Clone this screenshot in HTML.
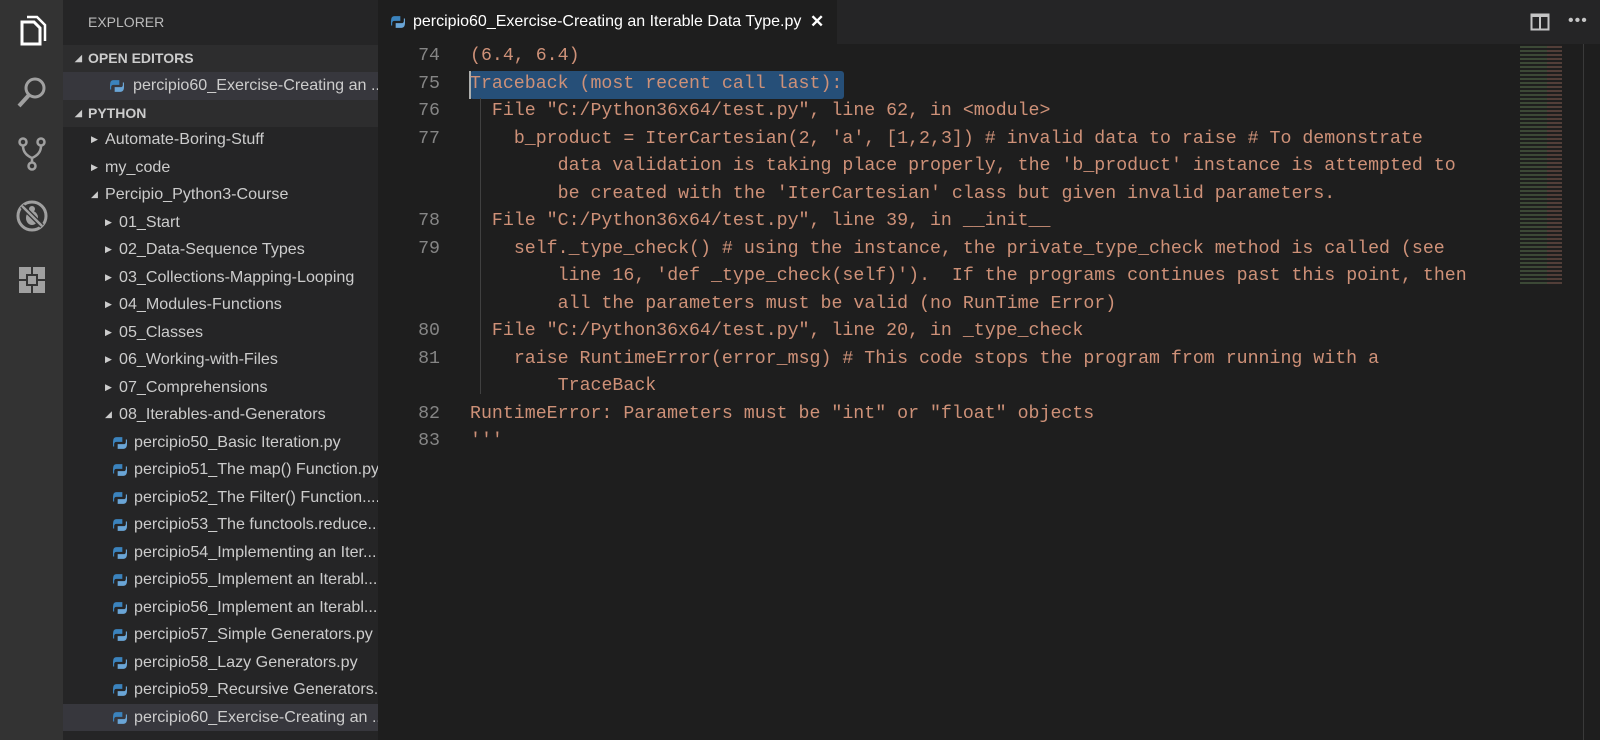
<!DOCTYPE html>
<html><head><meta charset="utf-8"><style>
*{margin:0;padding:0;box-sizing:border-box}
body{width:1600px;height:740px;background:#1e1e1e;overflow:hidden;position:relative;font-family:"Liberation Sans",sans-serif}
#act{position:absolute;left:0;top:0;width:63px;height:740px;background:#333}
#act svg{position:absolute;left:14px}
#side{position:absolute;left:63px;top:0;width:315px;height:740px;background:#252526;color:#ccc;font-size:16.1px}
.r{position:absolute;left:0;width:315px;height:27.5px;line-height:27.5px;white-space:nowrap;overflow:hidden}
.hd{font-weight:bold;font-size:14px;background:#2d2d2e;color:#ccc}
.sel{background:#37373d}
.tri{position:absolute;top:0;font-size:9px;color:#ccc}
.py{position:absolute;top:7px;width:14px;height:14px}
#tabs{position:absolute;left:378px;top:0;width:1222px;height:44px;background:#252526}
#tab{position:absolute;left:0;top:0;width:459px;height:44px;background:#1e1e1e;color:#fff;font-size:16px;line-height:44px}
#code{position:absolute;left:378px;top:44px;width:1222px;height:696px}
.l{position:absolute;font-family:"Liberation Mono",monospace;font-size:18.25px;color:#ce9178;white-space:pre;height:27.5px;line-height:27.5px}
.n{position:absolute;font-family:"Liberation Mono",monospace;font-size:18.25px;color:#858585;width:62px;text-align:right;left:0;line-height:27.5px}
</style></head><body>
<div id="act">
<svg style="top:12px" width="36" height="36" viewBox="0 0 36 36"><path d="M8 10h12l6 6v16H8z" fill="none" stroke="#fff" stroke-width="3"/><path d="M13 5h10l8 8v16" fill="none" stroke="#fff" stroke-width="2.5"/></svg>
<svg style="top:74px" width="36" height="36" viewBox="0 0 36 36"><circle cx="21" cy="14" r="9" fill="none" stroke="#a0a0a0" stroke-width="3"/><path d="M15 21L5 32" stroke="#a0a0a0" stroke-width="4"/></svg>
<svg style="top:136px" width="36" height="36" viewBox="0 0 36 36"><circle cx="9" cy="6" r="3.5" fill="none" stroke="#a0a0a0" stroke-width="2.5"/><circle cx="27" cy="6" r="3.5" fill="none" stroke="#a0a0a0" stroke-width="2.5"/><circle cx="18" cy="30" r="3.5" fill="none" stroke="#a0a0a0" stroke-width="2.5"/><path d="M9 10q0 8 9 12M27 10q0 8-9 12M18 22v4" fill="none" stroke="#a0a0a0" stroke-width="2.5"/></svg>
<svg style="top:198px" width="36" height="36" viewBox="0 0 36 36"><circle cx="18" cy="18" r="14" fill="none" stroke="#a0a0a0" stroke-width="3"/><ellipse cx="18" cy="20" rx="6" ry="7" fill="#a0a0a0"/><circle cx="18" cy="11" r="3" fill="#a0a0a0"/><path d="M8 8l20 20" stroke="#333" stroke-width="5"/><path d="M8 8l20 20" stroke="#a0a0a0" stroke-width="2.5"/></svg>
<svg style="top:262px" width="36" height="36" viewBox="0 0 36 36"><rect x="5" y="5" width="26" height="26" fill="#a0a0a0"/><rect x="12" y="12" width="12" height="12" fill="#333"/><rect x="14" y="14" width="8" height="8" fill="#a0a0a0"/><path d="M18 5v7M5 18h7M24 18h7M18 24v7" stroke="#333" stroke-width="2"/></svg>
</div>
<div id="side">
<div style="position:absolute;left:25px;top:14px;font-size:14px;color:#bbb">EXPLORER</div>
<div class="r hd" style="top:44.5px"><span class="tri" style="left:12px">◢</span><span style="position:absolute;left:25px">OPEN EDITORS</span></div>
<div class="r sel" style="top:72px"><svg class="py" style="left:47px" viewBox="0 0 12 12"><path d="M3 1h5v4H3q-2 0-2 2v2H0V5q0-4 3-4z" fill="#3b83bd"/><path d="M9 11H4V7h5q2 0 2-2V3h1v4q0 4-3 4z" fill="#6aa5d6"/></svg><span style="position:absolute;left:70px">percipio60_Exercise-Creating an ...</span></div>
<div class="r hd" style="top:99.5px"><span class="tri" style="left:12px">◢</span><span style="position:absolute;left:25px">PYTHON</span></div>
<div id="tree"></div>
</div>
<div id="tabs"><div id="tab"><svg style="position:absolute;left:13px;top:15px" width="14" height="14" viewBox="0 0 12 12"><path d="M3 1h5v4H3q-2 0-2 2v2H0V5q0-4 3-4z" fill="#3b83bd"/><path d="M9 11H4V7h5q2 0 2-2V3h1v4q0 4-3 4z" fill="#6aa5d6"/></svg><span style="position:absolute;left:35px">percipio60_Exercise-Creating an Iterable Data Type.py</span><span style="position:absolute;left:432px;font-weight:bold;font-size:17px">✕</span></div>
<svg style="position:absolute;left:1152px;top:13px" width="20" height="18" viewBox="0 0 20 18"><rect x="1.5" y="1.5" width="17" height="15" fill="none" stroke="#c5c5c5" stroke-width="2"/><path d="M10 2v14M2 3h16" stroke="#c5c5c5" stroke-width="2"/></svg>
<div style="position:absolute;left:1190px;top:12px;color:#c5c5c5;font-size:16px;letter-spacing:1px">•••</div>
</div>
<div id="code">
<div style="position:absolute;left:92px;top:27px;width:374px;height:27.5px;background:#264f78;border-radius:3px"></div>
<div style="position:absolute;left:91px;top:27px;width:2px;height:27.5px;background:#aeafad"></div>
<div style="position:absolute;left:102px;top:54px;width:1px;height:296px;background:#404040"></div>
<div id="lines"></div>
<div style="position:absolute;left:1142px;top:0;width:60px;height:240px;opacity:.4;background:repeating-linear-gradient(#1e1e1e 0 2px,transparent 2px 4px),linear-gradient(90deg,#6a8a5a 0 45%,#a07060 45% 70%,transparent 70%)"></div>
<div style="position:absolute;left:1205px;top:0;width:1px;height:696px;background:#3a3a3a"></div>
</div>
<script>
var PY='<path d="M3 1h5v4H3q-2 0-2 2v2H0V5q0-4 3-4z" fill="#3b83bd"/><path d="M9 11H4V7h5q2 0 2-2V3h1v4q0 4-3 4z" fill="#6aa5d6"/>';
var t=[[1,'Automate-Boring-Stuff',0],[1,'my_code',0],[2,'Percipio_Python3-Course',0],[1,'01_Start',1],[1,'02_Data-Sequence Types',1],[1,'03_Collections-Mapping-Looping',1],[1,'04_Modules-Functions',1],[1,'05_Classes',1],[1,'06_Working-with-Files',1],[1,'07_Comprehensions',1],[2,'08_Iterables-and-Generators',1],
[0,'percipio50_Basic Iteration.py'],[0,'percipio51_The map() Function.py'],[0,'percipio52_The Filter() Function....'],[0,'percipio53_The functools.reduce...'],[0,'percipio54_Implementing an Iter...'],[0,'percipio55_Implement an Iterabl...'],[0,'percipio56_Implement an Iterabl...'],[0,'percipio57_Simple Generators.py'],[0,'percipio58_Lazy Generators.py'],[0,'percipio59_Recursive Generators...'],[0,'percipio60_Exercise-Creating an ...']];
var h='';t.forEach(function(e,i){var top=126+i*27.5;var cls=i==t.length-1?'r sel':'r';
if(e[0]==0){h+='<div class="'+cls+'" style="top:'+top+'px"><svg class="py" style="left:50px" viewBox="0 0 12 12">'+PY+'</svg><span style="position:absolute;left:71px">'+e[1].replace(/ /g,'&nbsp;')+'</span></div>';}
else{var x=e[2]?42:28;h+='<div class="'+cls+'" style="top:'+top+'px"><span class="tri" style="left:'+x+'px">'+(e[0]==1?'▶':'◢')+'</span><span style="position:absolute;left:'+(x+14)+'px">'+e[1]+'</span></div>';}});
document.getElementById('tree').innerHTML=h;
var L=[['74',0,'(6.4, 6.4)'],['75',0,'Traceback (most recent call last):'],['76',2,'File "C:/Python36x64/test.py", line 62, in <module>'],['77',4,"b_product = IterCartesian(2, 'a', [1,2,3]) # invalid data to raise # To demonstrate"],['',8,"data validation is taking place properly, the 'b_product' instance is attempted to"],['',8,"be created with the 'IterCartesian' class but given invalid parameters."],['78',2,'File "C:/Python36x64/test.py", line 39, in __init__'],['79',4,"self._type_check() # using the instance, the private_type_check method is called (see"],['',8,"line 16, 'def _type_check(self)').  If the programs continues past this point, then"],['',8,'all the parameters must be valid (no RunTime Error)'],['80',2,'File "C:/Python36x64/test.py", line 20, in _type_check'],['81',4,'raise RuntimeError(error_msg) # This code stops the program from running with a'],['',8,'TraceBack'],['82',0,'RuntimeError: Parameters must be "int" or "float" objects'],['83',0,"'''"]];
var s='';L.forEach(function(e,i){var top=-1+i*27.5;if(e[0])s+='<div class="n" style="top:'+top+'px">'+e[0]+'</div>';
var d=document.createElement('div');d.textContent=e[2];s+='<div class="l" style="top:'+top+'px;left:'+(92+e[1]*10.96)+'px">'+d.innerHTML+'</div>';});
document.getElementById('lines').innerHTML=s;
</script>
</body></html>
